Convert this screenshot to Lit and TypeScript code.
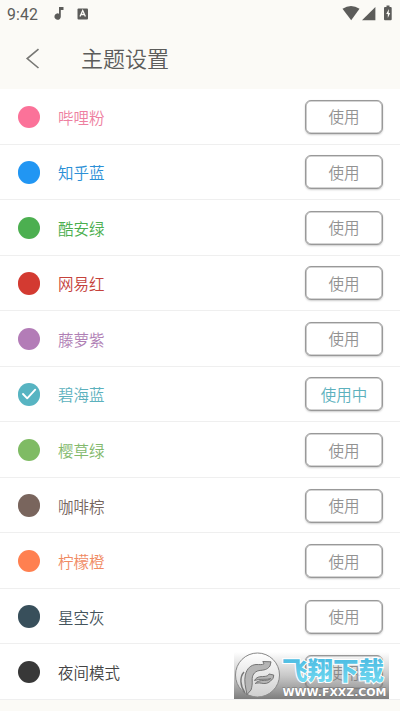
import { LitElement, html, css, svg } from "lit";
import { customElement } from "lit/decorators.js";

interface Theme { name: string; dot: string; text: string; active?: boolean }

const THEMES: Theme[] = [
  { name: "哔哩粉", dot: "#fb7299", text: "#ee7fa0" },
  { name: "知乎蓝", dot: "#2196f3", text: "#2b8fd6" },
  { name: "酷安绿", dot: "#4caf50", text: "#4caf50" },
  { name: "网易红", dot: "#d33a31", text: "#c5423b" },
  { name: "藤萝紫", dot: "#b37cb7", text: "#b07fb5" },
  { name: "碧海蓝", dot: "#57b4c2", text: "#5cb1bd", active: true },
  { name: "樱草绿", dot: "#7fbb64", text: "#83b96c" },
  { name: "咖啡棕", dot: "#79655d", text: "#75655e" },
  { name: "柠檬橙", dot: "#ff8050", text: "#f08a62" },
  { name: "星空灰", dot: "#384f5b", text: "#44545c" },
  { name: "夜间模式", dot: "#383838", text: "#444444" },
];

@customElement("app-root")
export class AppRoot extends LitElement {
  static styles = css`
    :host { display: block; width: 400px; height: 711px; overflow: hidden; position: relative;
      background: #fbfaf6; font-family: "Noto Sans CJK SC", sans-serif; color: #5c5c5a; }
    * { box-sizing: border-box; }
    .status { height: 28px; display: flex; align-items: center; padding: 0 7px; }
    .time { font: 15.8px/28px Roboto, sans-serif; width: 45px; white-space: nowrap; padding-top: 1px; letter-spacing: .1px; }
    .status svg, .bar svg { display: block; }
    .left { flex: 1; }
    .bar { height: 61px; display: flex; align-items: center; padding-left: 25px; }
    h1 { margin: 0 0 4px 40px; font-size: 22px; line-height: 30px; font-weight: 350; }
    .list { height: 611px; background: #fff; display: grid; grid-template-rows: repeat(11, 1fr); }
    .row { display: flex; align-items: center; padding: 1px 17px 0 18px; border-bottom: 1px solid #efefef; }
    .dot { width: 22.4px; height: 22.4px; border-radius: 50%; margin-right: 17.6px; }
    .dot svg { display: block; }
    .name { flex: 1; font-size: 15.5px; line-height: 24px; font-weight: 350; }
    .btn { width: 78px; height: 34px; border: 1px solid #999; border-radius: 6px; background: #fff; color: #929292;
      font: 350 15.5px/31px "Noto Sans CJK SC", sans-serif; text-align: center; padding: 0;
      box-shadow: inset 0 0 0 .6px #aaa, 0 1px 2px #0003; }
    .btn.active { color: #5cb1bd; }
    .mark { position: absolute; left: 234px; top: 652px; width: 155px; height: 47px; display: block; }
    .brand { font: 900 25px "Noto Sans CJK SC", sans-serif; }
    .url { font: 700 10.5px "DejaVu Sans", sans-serif; }
  `;

  private watermark() {
    return html`<svg class="mark" viewBox="0 0 155 47">
      <defs>
        <linearGradient id="shade" x2="0" y2="1"><stop stop-color="#777" stop-opacity="0"/><stop offset=".5" stop-color="#777" stop-opacity=".4"/><stop offset="1" stop-color="#666" stop-opacity=".85"/></linearGradient>
        <linearGradient id="disc" x2="0" y2="1"><stop stop-color="#fff"/><stop offset="1" stop-color="#cfcfcf"/></linearGradient>
        <linearGradient id="sky" x2="0" y2="1"><stop stop-color="#43b3de"/><stop offset="1" stop-color="#76def3"/></linearGradient>
      </defs>
      <rect width="155" height="47" fill="url(#shade)"/>
      <circle cx="23.5" cy="23" r="22" fill="url(#disc)" stroke="#888"/>
      <g fill="#b5b5b5" stroke="#6b6b6b" stroke-width=".9" stroke-linejoin="round">
        <path d="M13 42.5C11.5 35 10 29 11.3 23 13 16 17 13 22 12.5c4 0 6 .5 8-.7l-1.2-2.3 8.2.3-1 4.2c-3 4-6 4-11 4.6-5 1-7 5-6.8 9.4.2 4-.2 7-1.2 10Z"/>
        <path d="M20.5 28.5c3-5 7-3.5 11-4.2 2-.4 3-1 3.5-2.3l4.7 1c0 3-1.2 4.7-3 5.7-2 2.8-6 3.3-9.5 2.5-2.2-.4-4-.3-6 .3 2-2.5 5-3.1 9-3.1 2.8 0 5-.4 6.5-1.8-4 1.6-11-.4-16.2 1.9Z"/>
      </g>
      <path d="M10 20C5.5 25 6 34 11 41" fill="none" stroke="#777" stroke-width="1.4"/>
      <text class="brand" x="48" y="28" textLength="102" lengthAdjust="spacingAndGlyphs" fill="url(#sky)" stroke="#fff" stroke-width="2" paint-order="stroke">飞翔下载</text>
      <text class="url" x="48.5" y="44" textLength="104" lengthAdjust="spacingAndGlyphs" fill="#fff" stroke="#777" stroke-width=".8" paint-order="stroke">WWW.FXXZ.COM</text>
    </svg>`;
  }

  render() {
    return html`
      <div class="status">
        <span class="time">9:42</span>
        <svg class="left" height="28" viewBox="0 0 290 28" preserveAspectRatio="xMinYMid" fill="#5c5c5a">
          <path d="M7 7h4.5v3H8.8v6.4a3.2 3.2 0 1 1-1.8-2.7Z"/>
          <rect x="25.5" y="8.5" width="10.5" height="11" rx="1"/>
          <path d="m28 16.5 2.7-6 2.7 6M29 14.5h3.6" fill="none" stroke="#fbfaf6" stroke-width="1.3"/>
        </svg>
        <svg width="51" height="28" viewBox="0 0 51 28" fill="#5c5c5a">
          <path d="M.5 8.8q8.5-5.6 17 0L9.2 20.2Z"/><path d="M20 20.2 33.4 7v13.2Z"/>
          <path d="M44.5 5.5h3V7h1.2q1 0 1 1v11.2q0 1-1 1h-5.7q-1 0-1-1V8q0-1 1-1h1.5Z"/>
          <path d="m46.9 9-2.7 5h1.6v4l2.4-5h-1.5Z" fill="#fbfaf6"/>
        </svg>
      </div>
      <div class="bar">
        <svg width="16" height="22" viewBox="0 0 16 22"><path d="M13.5 1.2 2.2 10.6 13.5 20" fill="none" stroke="#777774" stroke-width="1.6"/></svg>
        <h1>主题设置</h1>
      </div>
      <div class="list">
        ${THEMES.map(t => html`<div class="row">
          <span class="dot" style="background:${t.dot}">${t.active ? html`<svg width="22" height="22" viewBox="0 0 22 22">${svg`<path d="m5 11 4.2 4.3 8-8.6" fill="none" stroke="#fff" stroke-width="1.9" stroke-linecap="round" stroke-linejoin="round"/>`}</svg>` : ""}</span>
          <span class="name" style="color:${t.text}">${t.name}</span>
          <button class="btn ${t.active ? "active" : ""}">${t.active ? "使用中" : "使用"}</button>
        </div>`)}
      </div>
      ${this.watermark()}`;
  }
}
